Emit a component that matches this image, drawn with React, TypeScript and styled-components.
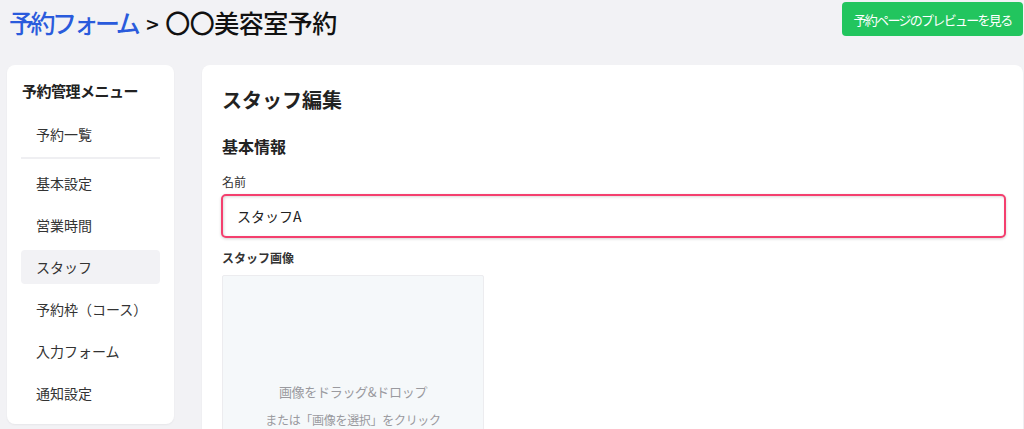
import React from 'react';
import styled, { createGlobalStyle } from 'styled-components';

const GlobalStyle = createGlobalStyle`
	body {
		margin: 0;
		background: #f2f2f5;
		font-family: 'Noto Sans CJK JP', 'Noto Sans', sans-serif;
		color: #222;
		overflow: hidden;
	}
`;

const Page = styled.div`
	padding: 0 2px 0 7px;
`;

const Header = styled.header`
	display: flex;
	justify-content: space-between;
	align-items: flex-start;
	height: 44px;
	margin-bottom: 21px;
`;

const Title = styled.h1`
	margin: 0 0 0 2px;
	font-size: 25px;
	font-weight: 500;
	line-height: 44px;
	letter-spacing: -0.5px;
	color: #111;
	white-space: nowrap;

	a {
		color: #2a5bdc;
		text-decoration: none;
		letter-spacing: -3.5px;
	}
`;

const Separator = styled.span`
	margin: 0 7px 0 9px;
	font-size: 22px;
`;

const PreviewButton = styled.button`
	margin-top: 2px;
	margin-right: -1px;
	height: 34px;
	width: 181px;
	padding: 0;
	border: none;
	border-radius: 4px;
	background: #22c55e;
	color: #fff;
	font-family: inherit;
	font-size: 13px;
	letter-spacing: -1.7px;
	white-space: nowrap;
	cursor: pointer;
`;

const Columns = styled.div`
	display: grid;
	grid-template-columns: 167px 1fr;
	gap: 28px;
	align-items: start;
`;

const Card = styled.section`
	background: #fff;
	border-radius: 8px;
	box-shadow: 0 1px 2px rgba(0, 0, 0, 0.05);
`;

const Sidebar = styled(Card)`
	padding: 16px 14px 14px;
`;

const SideTitle = styled.h2`
	margin: 0 0 16px 1px;
	font-size: 15px;
	font-weight: 700;
	line-height: 20px;
	letter-spacing: -0.5px;
`;

const NavList = styled.nav`
	display: flex;
	flex-direction: column;
	gap: 8px;
`;

const NavItem = styled.a<{ active?: boolean }>`
	display: flex;
	align-items: center;
	height: 34px;
	padding-left: 15px;
	border-radius: 4px;
	font-size: 14px;
	color: #333;
	background: ${(p) => (p.active ? '#f2f2f5' : 'transparent')};
`;

const Divider = styled.hr`
	margin: -2px 0 -1px;
	border: none;
	height: 2px;
	background: #efeff2;
`;

const Main = styled(Card)`
	padding: 24px 17px 0 20px;
	min-height: 400px;
`;

const PageHeading = styled.h2`
	margin: 0;
	font-size: 20px;
	font-weight: 700;
	line-height: 22px;
`;

const SectionHeading = styled.h3`
	margin: 24px 0 0;
	font-size: 16px;
	font-weight: 700;
	line-height: 22px;
`;

const Label = styled.label<{ strong?: boolean }>`
	display: block;
	margin: ${(p) => (p.strong ? '11px' : '16px')} 0 ${(p) => (p.strong ? '8px' : '3px')};
	font-size: 12px;
	font-weight: ${(p) => (p.strong ? 700 : 400)};
	line-height: 18px;
	color: #333;
`;

const TextInput = styled.input`
	display: block;
	box-sizing: border-box;
	width: 785px;
	height: 44px;
	margin-left: -1px;
	padding: 0 14px;
	border: 2px solid #f43f6e;
	border-radius: 5px;
	box-shadow: inset 1px 1px 3px rgba(0, 0, 0, 0.15), 0 1px 3px rgba(0, 0, 0, 0.18);
	font-family: inherit;
	font-size: 14px;
	color: #222;
	outline: none;
`;

const DropZone = styled.div`
	box-sizing: border-box;
	width: 262px;
	height: 262px;
	padding-top: 105px;
	border: 1px solid #ececef;
	border-radius: 2px;
	background: #f5f8fa;
	display: flex;
	flex-direction: column;
	align-items: center;
	gap: 6px;
	color: #9a9a9f;
`;

const DropText = styled.span<{ small?: boolean }>`
	font-size: ${(p) => (p.small ? '12px' : '13px')};
	line-height: 22px;
	letter-spacing: -0.3px;
`;

const menu = ['基本設定', '営業時間', 'スタッフ', '予約枠（コース）', '入力フォーム', '通知設定'];

const App = () => {
	return (
		<Page>
			<GlobalStyle />
			<Header>
				<Title>
					<a href="#">予約フォーム</a>
					<Separator>&gt;</Separator>
					〇〇美容室予約
				</Title>
				<PreviewButton>予約ページのプレビューを見る</PreviewButton>
			</Header>
			<Columns>
				<Sidebar>
					<SideTitle>予約管理メニュー</SideTitle>
					<NavList>
						<NavItem>予約一覧</NavItem>
						<Divider />
						{menu.map((item) => (
							<NavItem key={item} active={item === 'スタッフ'}>
								{item}
							</NavItem>
						))}
					</NavList>
				</Sidebar>
				<Main>
					<PageHeading>スタッフ編集</PageHeading>
					<SectionHeading>基本情報</SectionHeading>
					<Label>名前</Label>
					<TextInput defaultValue="スタッフA" />
					<Label strong>スタッフ画像</Label>
					<DropZone>
						<DropText>画像をドラッグ&amp;ドロップ</DropText>
						<DropText small>または「画像を選択」をクリック</DropText>
					</DropZone>
				</Main>
			</Columns>
		</Page>
	);
};

export default App;
